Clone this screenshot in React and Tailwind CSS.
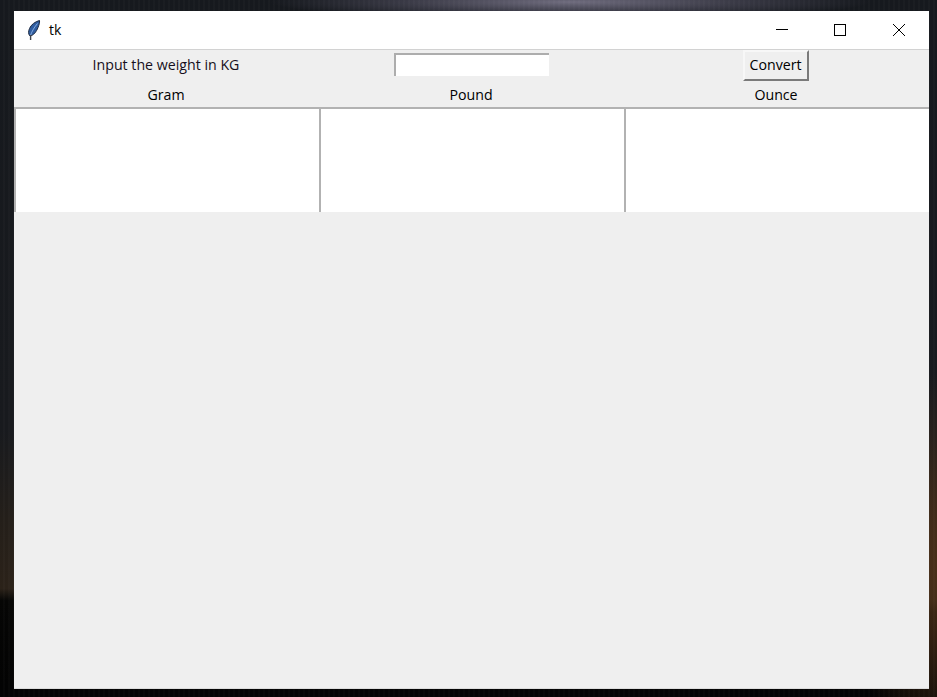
import React from "react";

function Feather() {
  return (
    <svg width="14" height="21" viewBox="0 0 14 21" className="block">
      <path d="M12.5 0.5 C8.5 1.5 4 4.5 2.5 8.5 C1.2 11.5 1.2 14 3 16 C6.5 15.5 9.5 11.5 11 7.5 C12 5 12.8 2.5 12.5 0.5 Z" fill="#2f5c9f" stroke="#1d2a40" strokeWidth="1" />
      <path d="M10.5 3.5 C7.5 7 5 11 3.4 15.6" fill="none" stroke="#8fb4e6" strokeWidth="0.9" />
      <path d="M3.6 15 L3.6 20" fill="none" stroke="#3f434b" strokeWidth="1.4" />
    </svg>
  );
}

function Cell({ children }) {
  return <div className="flex items-center justify-center pr-[1px]">{children}</div>;
}

function Label({ children }) {
  return <div className="flex items-center justify-center pr-[1px] pt-[2px]">{children}</div>;
}

function OutputBox() {
  return <div className="h-[105px] border-t-2 border-l-2 border-[#b2b2b2] bg-white" />;
}

export default function App() {
  return (
    <div className="h-[697px] w-[937px] overflow-hidden pl-[14px] pr-[8px] pt-[11px] pb-[8px] bg-[repeating-linear-gradient(90deg,transparent_0px,transparent_3px,rgba(255,255,255,0.02)_3px,rgba(255,255,255,0.02)_5px),radial-gradient(ellipse_300px_18px_at_570px_2px,#6f6c7e,#3a3a46_55%,transparent),radial-gradient(ellipse_100px_200px_at_950px_570px,#4d3119,transparent),linear-gradient(180.7deg,#16191e_0px,#181a1e_440px,#241f1a_530px,#2b2219_600px,#060605_612px,#030303_697px)]">
      <div className="flex h-full flex-col border-b border-[#dcdcdc] bg-[#efefef] text-black font-['Open_Sans',sans-serif] text-[14.2px] leading-5">
        <div className="flex h-[39px] shrink-0 items-center border-b border-[#d2d2d2] bg-white">
          <div className="ml-[13px] mr-[8px] pt-[1px]">
            <Feather />
          </div>
          <span className="text-[14px] text-black">tk</span>
          <div className="ml-auto flex h-full">
            <div className="flex w-[58px] items-center justify-center">
              <svg width="12" height="12" viewBox="0 0 12 12" shapeRendering="crispEdges">
                <path d="M0 5.5H12" stroke="#000" strokeWidth="1" />
              </svg>
            </div>
            <div className="flex w-[58px] items-center justify-center">
              <svg width="12" height="12" viewBox="0 0 12 12" shapeRendering="crispEdges">
                <rect x="0.5" y="0.5" width="11" height="11" fill="none" stroke="#000" />
              </svg>
            </div>
            <div className="flex w-[60px] items-center justify-center">
              <svg width="12" height="12" viewBox="0 0 12 12">
                <path d="M0 0L12 12M12 0L0 12" stroke="#000" strokeWidth="1" />
              </svg>
            </div>
          </div>
        </div>
        <div className="grid h-[31px] grid-cols-3">
          <div className="flex items-center justify-center pb-[2px] pr-[1px]">
            <span className="text-[#160f20]">Input the weight in KG</span>
          </div>
          <div className="flex items-start justify-center pt-[3px]">
            <div className="h-[23px] w-[155px] border-t-2 border-l-2 border-[#adadad] bg-white" />
          </div>
          <Cell>
            <button className="mr-[1px] h-[31px] w-[66px] border-2 border-[#f7f7f7] border-r-[#7a7a7a] border-b-[#7a7a7a] bg-[#efefef] pb-[1px] text-[14.2px]">
              Convert
            </button>
          </Cell>
        </div>
        <div className="grid h-[26px] grid-cols-3">
          <Label>Gram</Label>
          <Label>Pound</Label>
          <Label>Ounce</Label>
        </div>
        <div className="grid grid-cols-3">
          <OutputBox />
          <OutputBox />
          <OutputBox />
        </div>
      </div>
    </div>
  );
}
